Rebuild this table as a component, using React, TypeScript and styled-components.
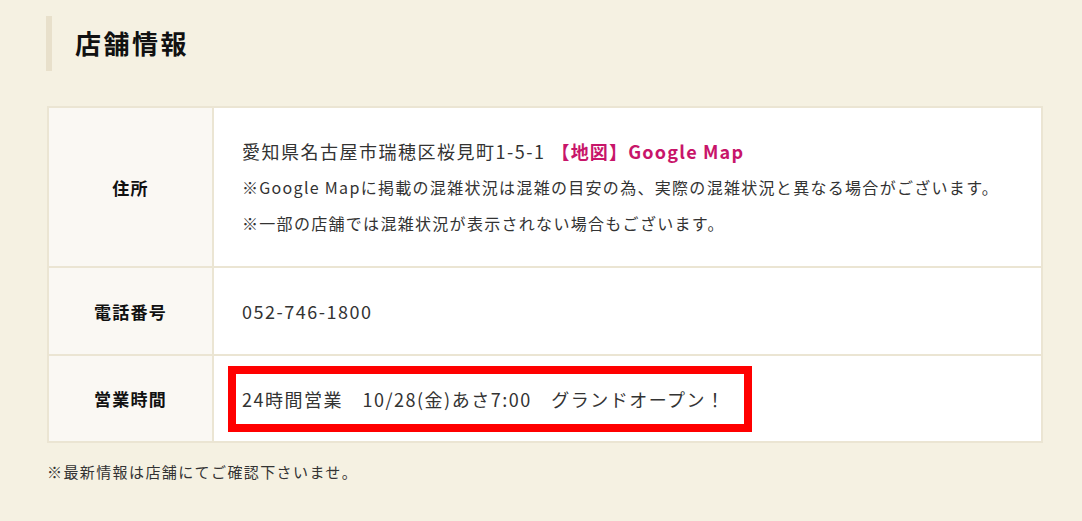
import React from 'react'
import styled, { createGlobalStyle } from 'styled-components'

const GlobalStyle = createGlobalStyle`
  html, body {
    margin: 0;
    padding: 0;
    background: #f5f1e2;
  }
  body {
    font-family: "Noto Sans CJK JP", "Noto Sans", sans-serif;
    color: #333;
  }
`

const Page = styled.div`
  padding: 16px 39px 0 47px;
`

const Heading = styled.h2`
  margin: 0 0 0 -1px;
  height: 55px;
  display: flex;
  align-items: center;
  border-left: 6px solid #e8e0cb;
  padding: 0 0 3px 23px;
  font-size: 26px;
  font-weight: 700;
  letter-spacing: 2.5px;
  color: #111;
  box-sizing: border-box;
`

const InfoTable = styled.table`
  width: 100%;
  margin-top: 35px;
  border-collapse: collapse;
  border: 2px solid #ebe5d3;
`

const Row = styled.tr<{ h: number }>`
  height: ${({ h }) => h}px;
  border-bottom: 2px solid #ebe5d3;
`

const Label = styled.th`
  width: 163px;
  background: #faf8f3;
  border-right: 2px solid #ebe5d3;
  font-size: 17px;
  font-weight: 700;
  letter-spacing: 1.3px;
  color: #111;
  text-align: center;
  vertical-align: middle;
  padding: 0;
`

const Value = styled.td`
  background: #fff;
  padding: 0 28px;
  vertical-align: middle;
  font-size: 18px;
  letter-spacing: 1.5px;
  line-height: 36px;
`

const Line = styled.div<{ small?: boolean }>`
  font-size: ${({ small }) => (small ? '16px' : '18px')};
  letter-spacing: ${({ small }) => (small ? '1.3px' : '1.5px')};
  line-height: 36px;
`

const MapLink = styled.a`
  color: #c8156a;
  font-weight: 700;
  text-decoration: none;
  letter-spacing: 1.2px;
  margin-left: 6px;
`

const Highlight = styled.span`
  display: inline-block;
  border: 8px solid #ff0000;
  padding: 7px 6px;
  margin: -15px 0 -15px -14px;
  line-height: 36px;
  box-sizing: border-box;
  width: 524px;
`

const Note = styled.p`
  margin: 18px 0 0;
  font-size: 15px;
  letter-spacing: 1.4px;
  color: #333;
`

export default function App() {
  return (
    <>
      <GlobalStyle />
      <Page>
        <Heading>店舗情報</Heading>
        <InfoTable>
          <tbody>
            <Row h={160}>
              <Label>住所</Label>
              <Value>
                <Line>
                  愛知県名古屋市瑞穂区桜見町1-5-1
                  <MapLink href="#">【地図】Google Map</MapLink>
                </Line>
                <Line small>※Google Mapに掲載の混雑状況は混雑の目安の為、実際の混雑状況と異なる場合がございます。</Line>
                <Line small>※一部の店舗では混雑状況が表示されない場合もございます。</Line>
              </Value>
            </Row>
            <Row h={88}>
              <Label>電話番号</Label>
              <Value>052-746-1800</Value>
            </Row>
            <Row h={87}>
              <Label>営業時間</Label>
              <Value>
                <Highlight>24時間営業　10/28(金)あさ7:00　グランドオープン！</Highlight>
              </Value>
            </Row>
          </tbody>
        </InfoTable>
        <Note>※最新情報は店舗にてご確認下さいませ。</Note>
      </Page>
    </>
  )
}
